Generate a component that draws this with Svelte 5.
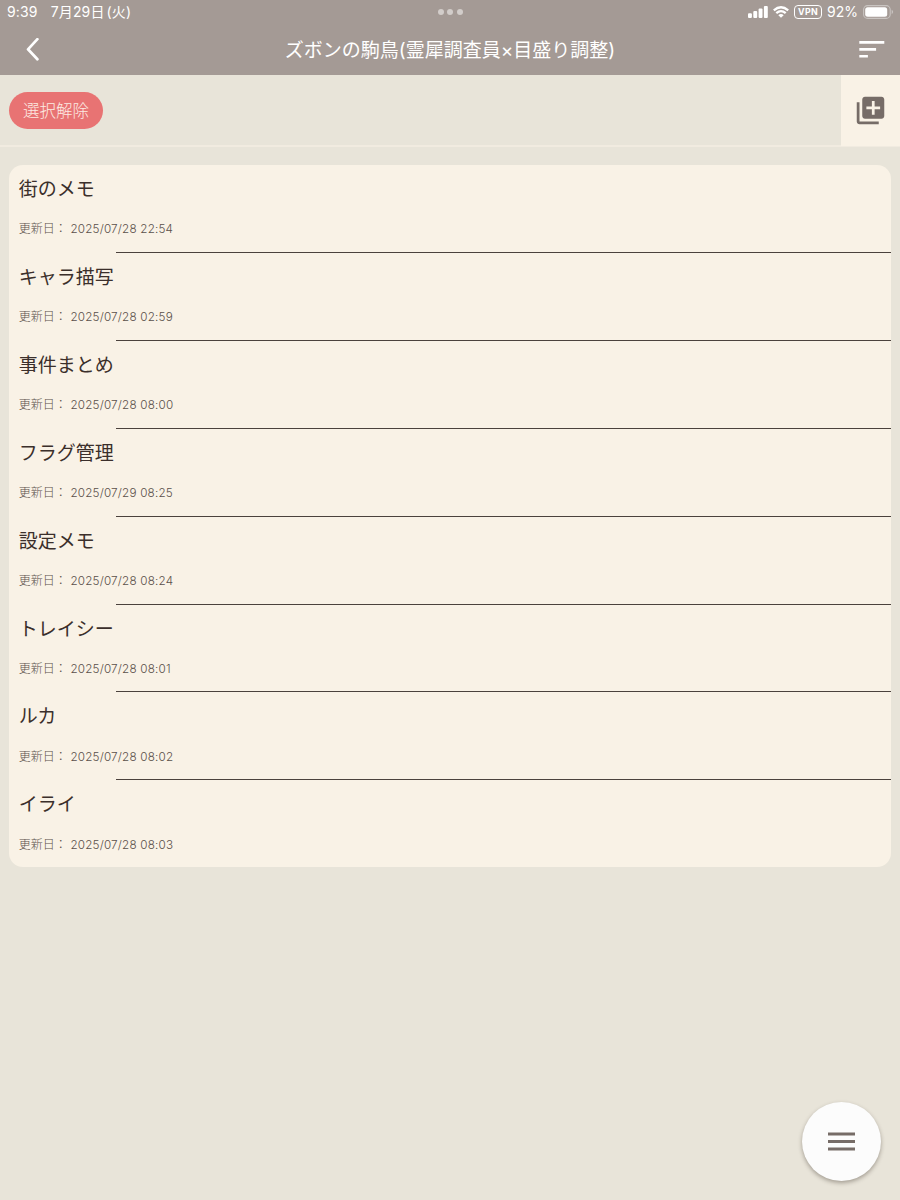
<script>
  const notes = [
    { title: '街のメモ', date: '2025/07/28 22:54' },
    { title: 'キャラ描写', date: '2025/07/28 02:59' },
    { title: '事件まとめ', date: '2025/07/28 08:00' },
    { title: 'フラグ管理', date: '2025/07/29 08:25' },
    { title: '設定メモ', date: '2025/07/28 08:24' },
    { title: 'トレイシー', date: '2025/07/28 08:01' },
    { title: 'ルカ', date: '2025/07/28 08:02' },
    { title: 'イライ', date: '2025/07/28 08:03' }
  ];
</script>

<div class="screen">
  <header>
    <div class="status">
      <div class="clock"><span>9:39</span><span class="day">7月29日<i>(火)</i></span></div>
      <div class="dots"><b></b><b></b><b></b></div>
      <div class="system">
        <svg width="20" height="12" viewBox="0 0 20 12" fill="#fff">
          <rect x="0" y="7.3" width="3.9" height="4.7" rx="1" />
          <rect x="5.3" y="5" width="3.9" height="7" rx="1" />
          <rect x="10.6" y="2.6" width="3.9" height="9.4" rx="1" />
          <rect x="15.9" y="0" width="3.9" height="12" rx="1" />
        </svg>
        <svg class="wifi" width="16" height="12" viewBox="0 0 16 12" fill="none" stroke="#fff" stroke-width="2.3">
          <path d="M.8 4.4Q8-1.9 15.2 4.4" />
          <path d="M3.3 7.2Q8 3.1 12.7 7.2" />
          <path d="M8 11.8L5.3 9.2Q8 7 10.7 9.2Z" fill="#fff" stroke="none" />
        </svg>
        <span class="vpn">VPN</span>
        <span class="percent">92%</span>
        <svg class="battery" width="31" height="14" viewBox="0 0 31 14">
          <rect x=".6" y=".6" width="26.6" height="12.8" rx="4" fill="none" stroke="#c9c4c1" stroke-width="1.1" />
          <rect x="2.2" y="2.2" width="22" height="9.6" rx="2.5" fill="#fff" />
          <path d="M28.7 4.8Q31.6 7 28.7 9.2Z" fill="#c9c4c1" />
        </svg>
      </div>
    </div>
    <div class="nav">
      <svg class="back" width="16" height="24" viewBox="0 0 16 24" fill="none" stroke="#fff" stroke-width="2.7" stroke-linecap="round" stroke-linejoin="round">
        <path d="M13.4 1.2L4 11.3L13.4 21.2" />
      </svg>
      <h1>ズボンの駒鳥(霊犀調査員×目盛り調整)</h1>
      <svg class="sort" width="26" height="18" viewBox="0 0 26 18" fill="#fff">
        <path d="M.3 0h25v2.7h-25zM.3 7h16.8v2.7H.3zM.3 13.9h8.6v2.7H.3z" />
      </svg>
    </div>
  </header>

  <div class="toolbar">
    <button class="clear">選択解除</button>
    <button class="add" aria-label="追加">
      <svg width="33" height="33" viewBox="0 0 24 24" fill="#766c67">
        <path d="M4 6H2v14c0 1.1.9 2 2 2h14v-2H4V6zm16-4H8c-1.1 0-2 .9-2 2v12c0 1.1.9 2 2 2h12c1.1 0 2-.9 2-2V4c0-1.1-.9-2-2-2zm-1 9h-4v4h-2v-4H9V9h4V5h2v4h4v2z" />
      </svg>
    </button>
  </div>

  <main>
    {#each notes as note}
      <article>
        <h2>{note.title}</h2>
        <p><span>更新日：</span><time>{note.date}</time></p>
        <hr />
      </article>
    {/each}
  </main>

  <button class="fab" aria-label="メニュー">
    <svg width="28" height="20" viewBox="0 0 28 20" fill="#766c67">
      <path d="M0 .5h27v2.9H0zM0 8h27v2.9H0zM0 15.5h27v2.9H0z" />
    </svg>
  </button>
</div>

<style>
  :global(body) { margin: 0; background: #e8e4d9; }
  .screen {
    position: relative;
    box-sizing: border-box;
    width: 900px;
    height: 1200px;
    overflow: hidden;
    background: #e8e4d9;
    font-family: Inter, "Noto Sans CJK JP", sans-serif;
  }
  svg { display: block; flex: none; }
  button { border: 0; padding: 0; font-family: inherit; }
  header { height: 75px; background: #a49a95; color: #fff; }
  .status {
    height: 24px;
    display: grid;
    grid-template-columns: 1fr auto 1fr;
    align-items: center;
  }
  .clock { display: flex; gap: 13px; padding-left: 7px; font-size: 14px; line-height: 24px; letter-spacing: .15px; white-space: nowrap; }
  .clock i { font-style: normal; margin-left: 2px; }
  .dots { display: flex; gap: 3.5px; }
  .dots b { width: 6px; height: 6px; border-radius: 50%; background: #d2cdca; }
  .system { display: flex; align-items: center; justify-content: flex-end; padding-right: 6px; }
  .wifi { margin-left: 5px; }
  .vpn {
    box-sizing: border-box;
    width: 28px;
    height: 14px;
    margin-left: 5px;
    border: 1.3px solid #fff;
    border-radius: 4px;
    font-size: 8.8px;
    font-weight: 700;
    line-height: 12px;
    letter-spacing: .3px;
    text-align: center;
  }
  .percent { margin-left: 5px; font-size: 14px; line-height: 24px; }
  .battery { margin-left: 5px; }
  .nav {
    height: 51px;
    display: grid;
    grid-template-columns: 60px 1fr 60px;
    align-items: center;
  }
  .back { margin-left: 24px; }
  .sort { margin-left: 19px; }
  h1 { margin: 2px 0 0; font-size: 19px; font-weight: 400; line-height: 28px; text-align: center; white-space: nowrap; }
  .toolbar {
    box-sizing: border-box;
    height: 72px;
    border-bottom: 2px solid #f1ebe0;
    display: flex;
    justify-content: space-between;
  }
  .clear {
    width: 94px;
    height: 37px;
    margin: 17px 0 0 9px;
    border-radius: 19px;
    background: #e87373;
    color: #fcebe3;
    font-size: 16.5px;
    font-weight: 300;
    line-height: 37px;
    padding-top: 1px;
  }
  .add { width: 59px; height: 71px; background: #f9f2e6; display: grid; place-items: center; }
  main {
    margin: 18.3px 9.5px 0 9.3px;
    border-radius: 14px;
    overflow: hidden;
    background: #f9f2e6;
  }
  article {
    height: 87.87px;
    display: flex;
    flex-direction: column;
    box-sizing: border-box;
    padding-left: 9.5px;
  }
  article:last-child { height: 86.7px; }
  h2 { margin: 11px 0 0; font-size: 19px; font-weight: 400; line-height: 28px; color: #3b2f2b; }
  p { margin: 15.2px 0 0; display: flex; gap: 3.6px; font-size: 12px; font-weight: 300; line-height: 20px; color: #5a504a; }
  time { font-size: 11.7px; letter-spacing: .19px; }
  hr { width: 775px; height: 1px; margin: auto 0 0 auto; border: 0; background: #4b423d; }
  article:last-child hr { display: none; }
  .fab {
    position: absolute;
    left: 802px;
    top: 1102px;
    width: 79px;
    height: 79px;
    border-radius: 50%;
    display: grid;
    place-items: center;
    background: #fcfcfc;
    box-shadow: 0 2px 4px rgba(60, 50, 40, .4);
  }
</style>
